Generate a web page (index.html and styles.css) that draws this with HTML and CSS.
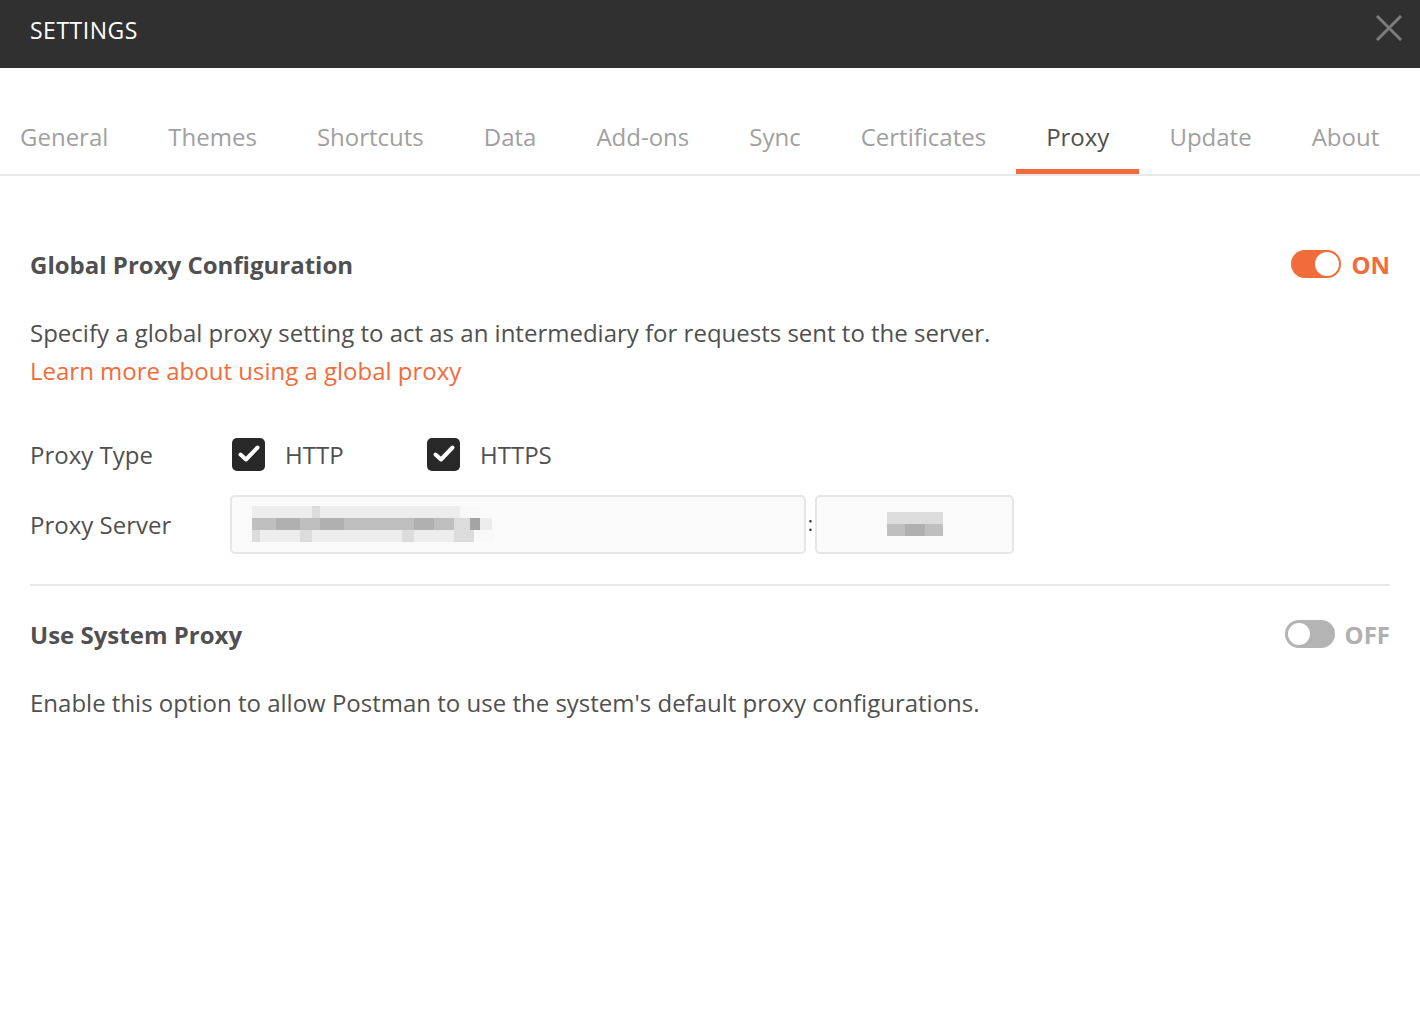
FILE: index.html
```html
<!DOCTYPE html>
<html>
<head>
<meta charset="utf-8">
<link rel="stylesheet" href="styles.css">
</head>
<body>
<div class="modal">
  <header class="header">
    <div class="title">SETTINGS</div>
    <svg class="close" width="26" height="26" viewBox="0 0 26 26"><path d="M2 2 L24 24 M24 2 L2 24" stroke="#7c7c7c" stroke-width="3" stroke-linecap="square"/></svg>
  </header>
  <nav class="tabs">
    <div class="tab">General</div>
    <div class="tab">Themes</div>
    <div class="tab">Shortcuts</div>
    <div class="tab">Data</div>
    <div class="tab">Add-ons</div>
    <div class="tab">Sync</div>
    <div class="tab">Certificates</div>
    <div class="tab active">Proxy</div>
    <div class="tab">Update</div>
    <div class="tab">About</div>
  </nav>
  <main class="content">
    <section class="section first">
      <div class="section-head">
        <h2 class="section-title">Global Proxy Configuration</h2>
        <div class="switch on"><span class="track"><span class="knob"></span></span><span class="switch-label">ON</span></div>
      </div>
      <p class="desc">Specify a global proxy setting to act as an intermediary for requests sent to the server.<br><a class="link">Learn more about using a global proxy</a></p>
      <div class="row type-row">
        <div class="row-label">Proxy Type</div>
        <label class="check"><span class="box"><svg width="24" height="20" viewBox="0 0 24 20"><path d="M3.5 10.5 L9 15.5 L20.5 3.5" fill="none" stroke="#fff" stroke-width="4" stroke-linecap="round" stroke-linejoin="round"/></svg></span><span class="check-text">HTTP</span></label>
        <label class="check"><span class="box"><svg width="24" height="20" viewBox="0 0 24 20"><path d="M3.5 10.5 L9 15.5 L20.5 3.5" fill="none" stroke="#fff" stroke-width="4" stroke-linecap="round" stroke-linejoin="round"/></svg></span><span class="check-text">HTTPS</span></label>
      </div>
      <div class="row server-row">
        <div class="row-label">Proxy Server</div>
        <div class="input host">
          <div class="blur">
            <div class="pix-row"><i class="p1 w20"></i><i class="p1 w40"></i><i class="p2 w8"></i><i class="p1 w60"></i><i class="p1 w40"></i><i class="p1 w40"></i><i class="p0 w20"></i></div>
            <div class="pix-row"><i class="p3 w24"></i><i class="p4 w24"></i><i class="p3 w20"></i><i class="p4 w24"></i><i class="p3 w70"></i><i class="p4 w20"></i><i class="p3 w20"></i><i class="p2 w16"></i><i class="p5 w10"></i><i class="p1 w12"></i></div>
            <div class="pix-row"><i class="p2 w8"></i><i class="p1 w40"></i><i class="p2 w12"></i><i class="p1 w60"></i><i class="p1 w30"></i><i class="p2 w12"></i><i class="p1 w40"></i><i class="p2 w20"></i><i class="p0 w20"></i></div>
          </div>
        </div>
        <span class="colon">:</span>
        <div class="input port">
          <div class="blur">
            <div class="pix-row"><i class="p2 w56"></i></div>
            <div class="pix-row"><i class="p3 w18"></i><i class="p4 w20"></i><i class="p3 w18"></i></div>
          </div>
        </div>
      </div>
    </section>
    <hr class="divider">
    <section class="section second">
      <div class="section-head">
        <h2 class="section-title">Use System Proxy</h2>
        <div class="switch off"><span class="track"><span class="knob"></span></span><span class="switch-label">OFF</span></div>
      </div>
      <p class="desc">Enable this option to allow Postman to use the system's default proxy configurations.</p>
    </section>
  </main>
</div>
</body>
</html>
```

FILE: styles.css
```css
* { box-sizing: border-box; }
html, body { margin: 0; padding: 0; background: #fff; }
body { font-family: "Open Sans", "Noto Sans", sans-serif; color: #505050; width: 1420px; height: 1016px; overflow: hidden; }

.header {
  height: 68px;
  background: #303030;
  display: flex;
  align-items: center;
  justify-content: space-between;
  padding: 0 18px 0 30px;
}
.title { color: #fff; font-size: 23px; font-weight: 400; letter-spacing: 0.5px; margin-top: -9px; }
.close { margin-top: -13px; }

.tabs {
  display: flex;
  height: 108px;
  padding-left: 20px;
  padding-top: 50px;
  border-bottom: 2px solid #e8e8e8;
}
.tab {
  font-size: 24px;
  color: #a0a0a0;
  padding: 0 30px;
  height: 56px;
  line-height: 38px;
  border-bottom: 5px solid transparent;
  letter-spacing: 0;
}
.tab:first-child { padding-left: 0; }
.tab.active { color: #505050; border-bottom-color: #f26b3a; }

.content { padding: 0 30px; }
.section-head {
  display: flex;
  justify-content: space-between;
  align-items: center;
  height: 40px;
}
.section.first .section-head { margin-top: 68px; }
.section.second .section-head { margin-top: 28px; }
.section-title { margin: 0; font-size: 24px; font-weight: 700; color: #505050; letter-spacing: 0; }

.switch { display: flex; align-items: center; gap: 10px; }
.track { width: 50px; height: 28px; border-radius: 14px; display: block; position: relative; }
.knob { position: absolute; top: 2px; width: 24px; height: 24px; border-radius: 50%; background: #fff; }
.switch.on .track { background: #f26b3a; }
.switch.on .knob { right: 2px; }
.switch.off .track { background: #b4b4b4; }
.switch.off .knob { left: 1px; top: 1px; width: 26px; height: 26px; border: 2px solid #b4b4b4; }
.switch-label { font-size: 24px; font-weight: 700; }
.switch.on .switch-label { color: #f26b3a; }
.switch.off .switch-label { color: #b0b0b0; }

.desc { margin: 30px 0 0; font-size: 24px; line-height: 38px; color: #505050; letter-spacing: 0; }
.link { color: #f26b3a; text-decoration: none; }

.row { display: flex; align-items: center; }
.row-label { width: 200px; font-size: 24px; color: #505050; }
.type-row { margin-top: 46px; height: 36px; }
.check { display: flex; align-items: center; width: 195px; }
.box {
  width: 33px; height: 33px; border-radius: 5px; background: #282828;
  display: flex; align-items: center; justify-content: center;
  margin-left: 2px;
}
.check-text { margin-left: 20px; font-size: 24px; color: #505050; }

.server-row { margin-top: 22px; height: 60px; }
.input {
  height: 59px;
  background: #fafafa;
  border: 2px solid #e6e6e6;
  border-radius: 5px;
  display: flex;
  align-items: center;
}
.input.host { width: 576px; padding-left: 20px; }
.input.port { width: 199px; justify-content: center; }
.colon { width: 9px; text-align: center; font-size: 20px; color: #333; line-height: 1; }

.blur { display: flex; flex-direction: column; }
.pix-row { display: flex; height: 12px; }
.pix-row i { display: block; height: 12px; }
.p0 { background: #f8f8f8; }
.p1 { background: #ededed; }
.p2 { background: #dcdcdc; }
.p3 { background: #bfbfbf; }
.p4 { background: #b0b0b0; }
.p5 { background: #a4a4a4; }
.w8 { width: 8px; } .w10 { width: 10px; } .w12 { width: 12px; } .w16 { width: 16px; }
.w18 { width: 18px; } .w20 { width: 20px; } .w24 { width: 24px; } .w30 { width: 30px; }
.w40 { width: 40px; } .w56 { width: 56px; } .w60 { width: 60px; } .w70 { width: 70px; }

.divider { border: 0; border-top: 2px solid #e8e8e8; margin: 30px 0 0; }
```
